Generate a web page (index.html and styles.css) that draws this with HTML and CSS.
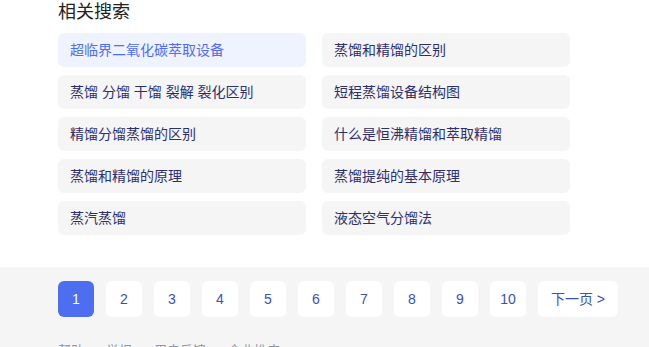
FILE: index.html
```html
<!DOCTYPE html>
<html lang="zh">
<head>
    <meta charset="UTF-8">
    <meta name="viewport" content="width=device-width, initial-scale=1.0">
    <title>相关搜索</title>
    <link rel="stylesheet" href="styles.css">
</head>
<body>

<div class="related">
    <div class="related-title">相关搜索</div>
    <div class="related-grid">
        <a class="related-item active" href="#">超临界二氧化碳萃取设备</a>
        <a class="related-item" href="#">蒸馏和精馏的区别</a>
        <a class="related-item" href="#">蒸馏 分馏 干馏 裂解 裂化区别</a>
        <a class="related-item" href="#">短程蒸馏设备结构图</a>
        <a class="related-item" href="#">精馏分馏蒸馏的区别</a>
        <a class="related-item" href="#">什么是恒沸精馏和萃取精馏</a>
        <a class="related-item" href="#">蒸馏和精馏的原理</a>
        <a class="related-item" href="#">蒸馏提纯的基本原理</a>
        <a class="related-item" href="#">蒸汽蒸馏</a>
        <a class="related-item" href="#">液态空气分馏法</a>
    </div>
</div>

<div class="bottom">
    <div class="pager">
        <span class="page current">1</span>
        <a class="page" href="#">2</a>
        <a class="page" href="#">3</a>
        <a class="page" href="#">4</a>
        <a class="page" href="#">5</a>
        <a class="page" href="#">6</a>
        <a class="page" href="#">7</a>
        <a class="page" href="#">8</a>
        <a class="page" href="#">9</a>
        <a class="page" href="#">10</a>
        <a class="page next" href="#">下一页 &gt;</a>
    </div>
    <div class="foot">
        <a href="#">帮助</a>
        <a href="#">举报</a>
        <a href="#">用户反馈</a>
        <a href="#">企业推广</a>
    </div>
</div>

</body>
</html>
```

FILE: styles.css
```css
body {
    margin: 0;
    font-family: Arial, "Liberation Sans", "Noto Sans CJK SC", sans-serif;
    background-color: #fff;
}
a {
    text-decoration: none;
}
.related {
    padding-left: 58px;
}
.related-title {
    font-size: 18px;
    line-height: 24px;
    color: #222;
    margin-bottom: 9px;
}
.related-grid {
    display: grid;
    grid-template-columns: 248px 248px;
    gap: 8px 16px;
}
.related-item {
    display: block;
    height: 34px;
    line-height: 34px;
    padding: 0 12px;
    font-size: 14px;
    color: #2c2f6b;
    background-color: #f5f5f6;
    border-radius: 6px;
    white-space: nowrap;
    overflow: hidden;
}
.related-item.active {
    background-color: #eff2ff;
    color: #4e6ef2;
}
.bottom {
    margin-top: 32px;
    background-color: #f5f5f6;
    padding: 14px 0 0 58px;
    height: 80px;
    overflow: hidden;
}
.pager {
    display: flex;
    gap: 12px;
}
.page {
    width: 36px;
    height: 36px;
    line-height: 36px;
    text-align: center;
    font-size: 14px;
    color: #3951b3;
    background-color: #fff;
    border-radius: 6px;
}
.page.current {
    background-color: #4e6ef2;
    color: #fff;
}
.page.next {
    width: 80px;
}
.foot {
    margin-top: 24px;
    display: flex;
    gap: 22px;
    font-size: 13px;
    line-height: 20px;
}
.foot a {
    color: #9195a3;
}
```
